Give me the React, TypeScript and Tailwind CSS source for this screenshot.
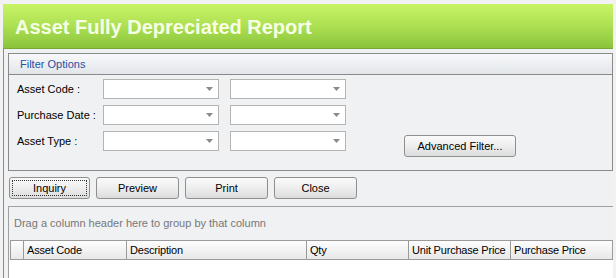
import React from "react";

const Combo = () => (
  <div className="w-[116px] h-[20px] bg-white border border-[#b4b4b4] flex items-center justify-end pr-[5px]">
    <svg width="7" height="4" viewBox="0 0 7 4">
      <path d="M0 0h7L3.5 4z" fill="#8a8a8a" />
    </svg>
  </div>
);

const Btn = ({ label, focus = false, w = "w-[82px]" }: { label: string; focus?: boolean; w?: string }) => (
  <div
    className={`${w} h-[22px] rounded-[3px] border border-[#8e8f8f] bg-gradient-to-b from-[#fafafa] via-[#eeeeee] to-[#dcdcdc] flex items-center justify-center p-[2px]`}
  >
    <div
      className={`w-full h-full flex items-center justify-center ${focus ? "border border-dotted border-[#333]" : ""}`}
    >
      {label}
    </div>
  </div>
);

const rows = ["Asset Code :", "Purchase Date :", "Asset Type :"];

const cols = [
  { name: "Asset Code", w: "w-[103px]" },
  { name: "Description", w: "w-[180px]" },
  { name: "Qty", w: "w-[102px]" },
  { name: "Unit Purchase Price", w: "w-[102px]" },
  { name: "Purchase Price", w: "w-[102px]" },
];

export default function App() {
  return (
    <div className="w-[616px] h-[278px] overflow-hidden bg-[#f2f2f2] pt-[4px] font-['Liberation_Sans',Arial,sans-serif] text-[11px] text-black">
      <div className="ml-[3px] mr-[3px] h-[45px] bg-gradient-to-b from-[#c8f466] via-[#ade052] to-[#8ac43c] border-b border-[#7aa836] flex items-center pl-[12px] pt-[2px]">
        <span className="text-[20px] font-bold text-[#f6ffe6] leading-none">Asset Fully Depreciated Report</span>
      </div>
      <div className="ml-[3px] mr-[3px] h-full border-l border-[#8c8c8c] bg-[#f0f1f3] pl-[4px] pt-[4px]">
        <div className="border border-[#8a8a8a]">
          <div className="h-[21px] bg-gradient-to-b from-[#f8f9fb] to-[#e2e5e9] border-b border-[#8a8a8a] flex items-center pl-[11px] pt-[1px] text-[#2451a0]">
            Filter Options
          </div>
          <div className="flex flex-col gap-[6px] pt-[4px] pb-[13px]">
            {rows.map((r, i) => (
              <div key={r} className="flex items-start">
                <div className="w-[94px] h-[20px] pl-[8px] flex items-center">{r}</div>
                <Combo />
                <div className="w-[11px]" />
                <Combo />
                {i === 2 && (
                  <div className="ml-[58px] mt-[4px]">
                    <Btn label="Advanced Filter..." w="w-[112px]" />
                  </div>
                )}
              </div>
            ))}
          </div>
        </div>
        <div className="flex gap-[6px] ml-[1px] mt-[6px]">
          <Btn label="Inquiry" focus w="w-[81px]" />
          <Btn label="Preview" w="w-[83px]" />
          <Btn label="Print" w="w-[83px]" />
          <Btn label="Close" w="w-[83px]" />
        </div>
        <div className="mt-[7px] border-t border-l border-[#a0a0a0] h-full">
          <div className="h-[33px] flex items-center pl-[5px] text-[#777]">
            Drag a column header here to group by that column
          </div>
          <div className="ml-[1px] flex h-[20px] border-t border-b border-[#9a9a9a] bg-gradient-to-b from-[#fdfdfd] to-[#e8e8e8]">
            <div className="w-[14px] shrink-0 border-l border-r border-[#9a9a9a]" />
            {cols.map((c) => (
              <div
                key={c.name}
                className={`${c.w} shrink-0 pl-[3px] flex items-center whitespace-nowrap overflow-hidden tracking-[-0.2px] border-r border-[#9a9a9a]`}
              >
                {c.name}
              </div>
            ))}
          </div>
          <div className="bg-white h-[40px]" />
        </div>
      </div>
    </div>
  );
}
